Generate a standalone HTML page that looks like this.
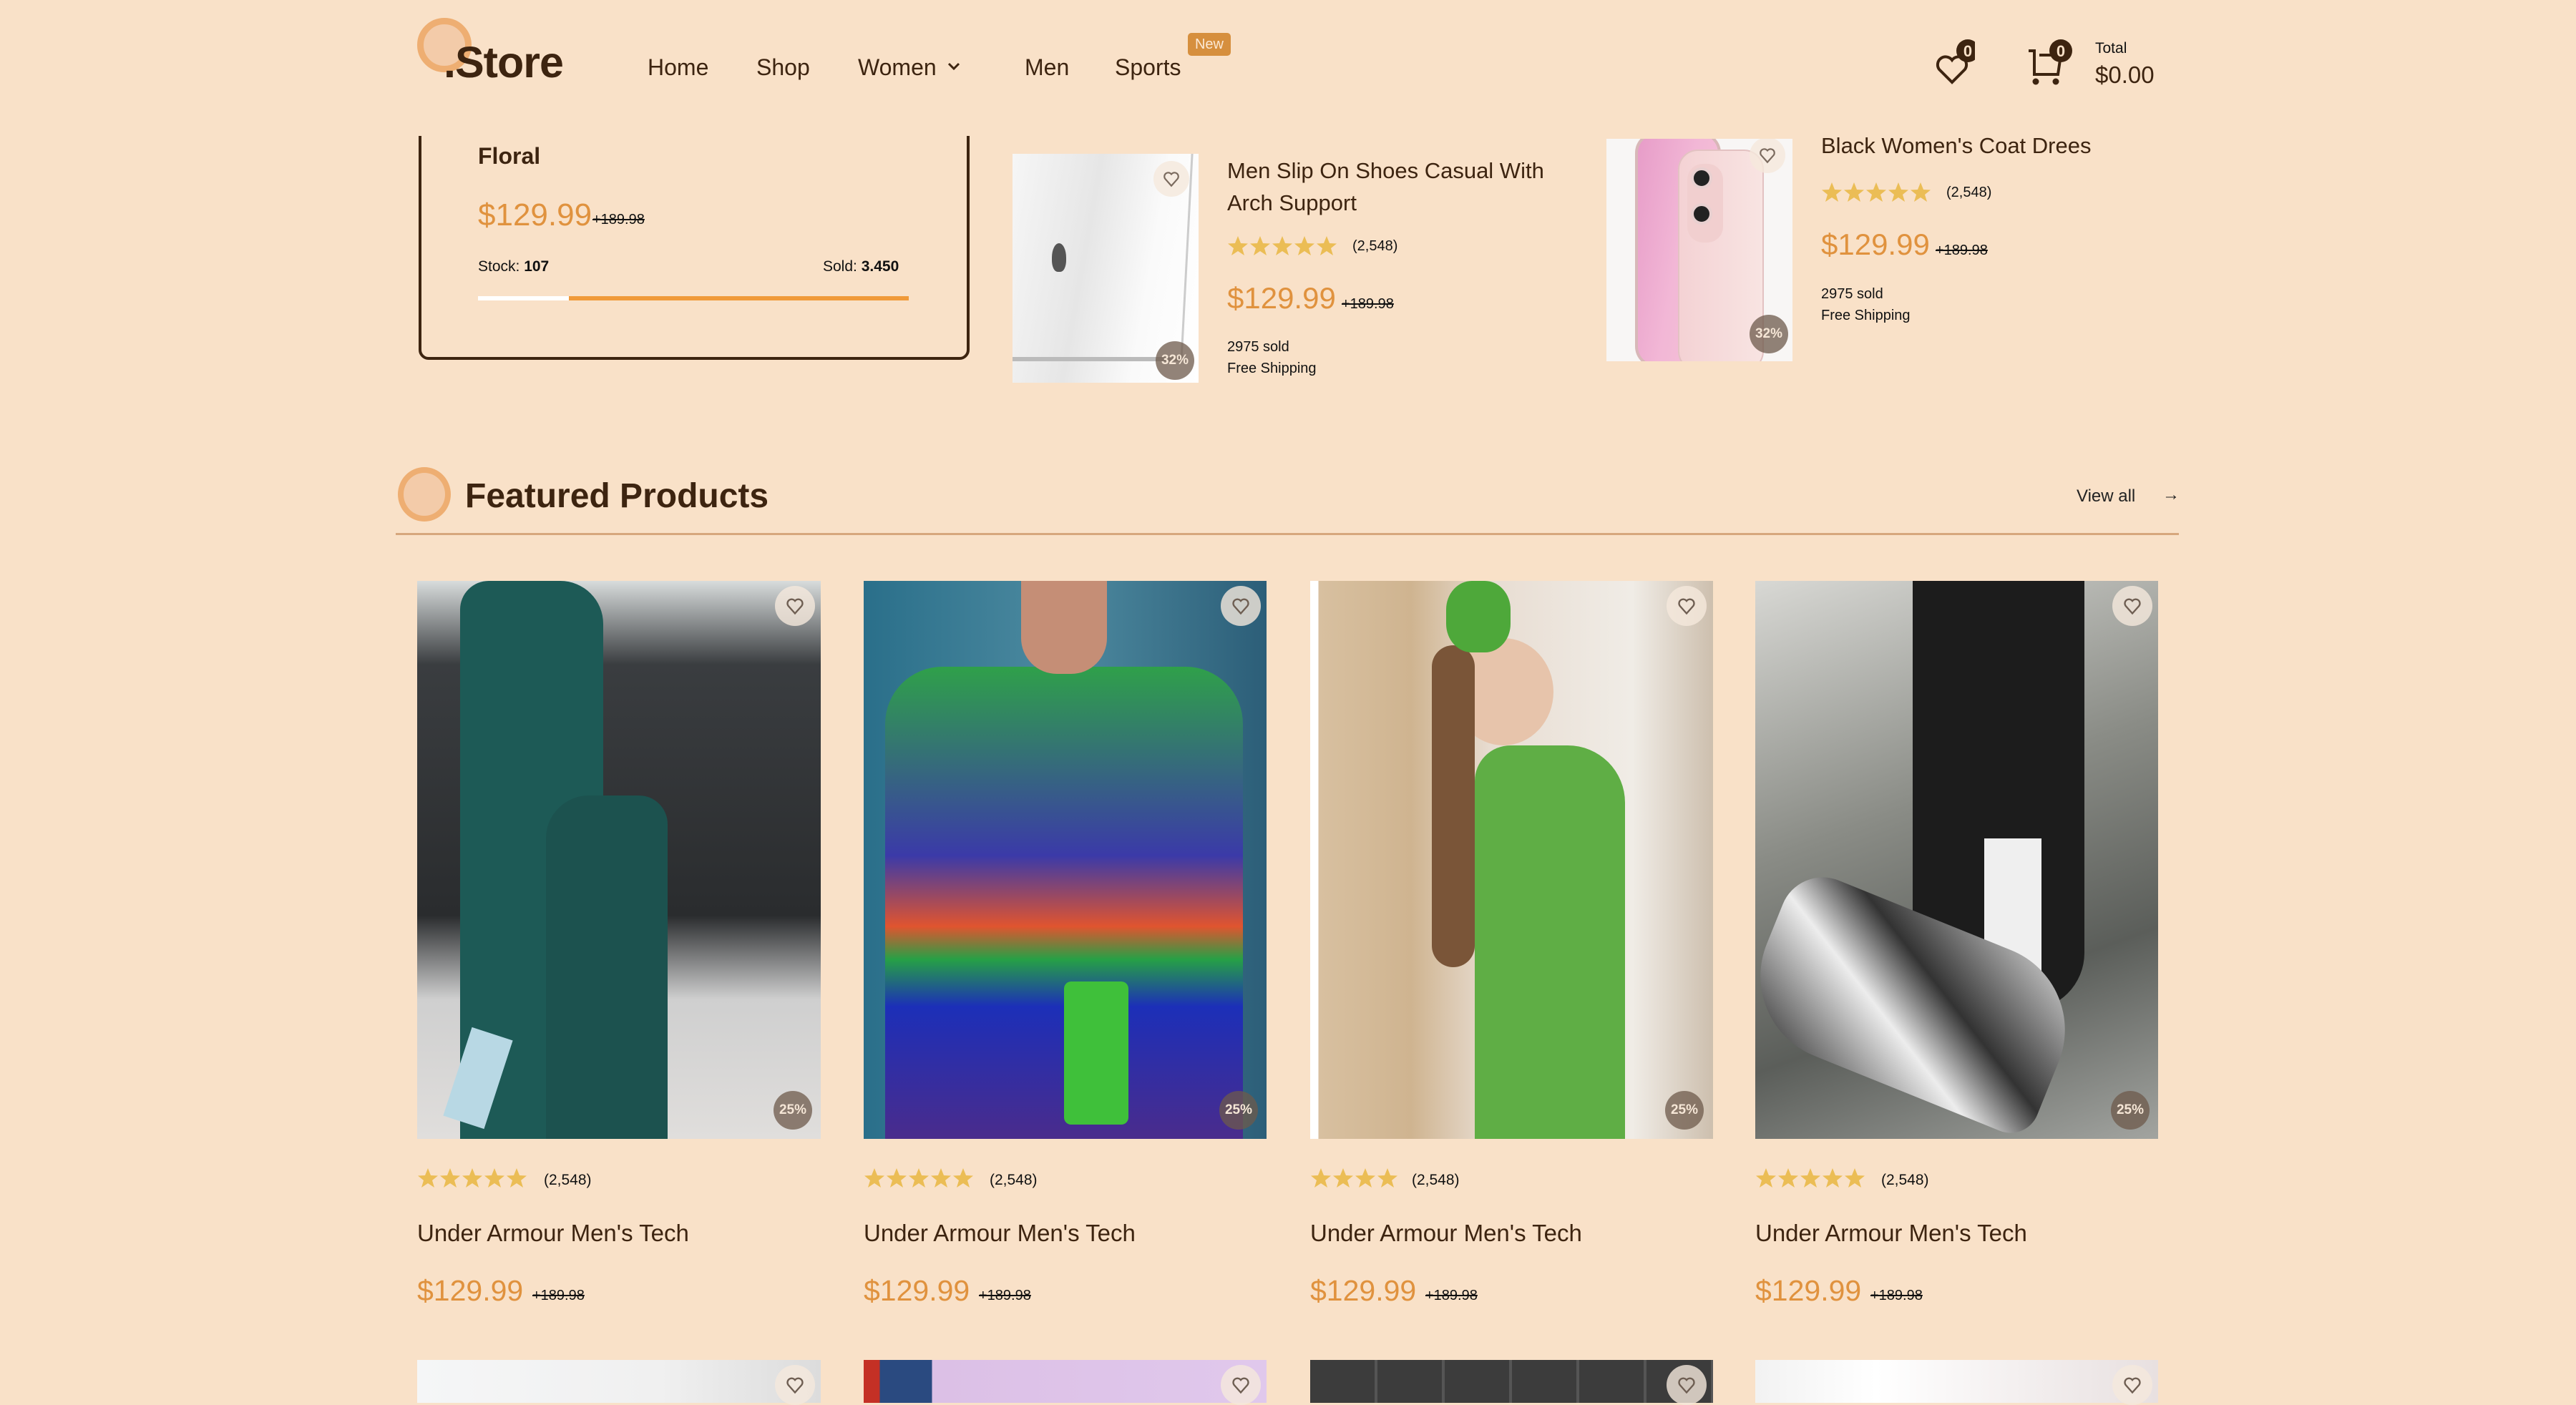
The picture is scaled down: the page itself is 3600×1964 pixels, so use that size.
<!DOCTYPE html>
<html><head><meta charset="utf-8"><style>
*{margin:0;padding:0;box-sizing:border-box}
body{width:3600px;height:1958px;background:#f9e1c8;font-family:"Liberation Sans",sans-serif;color:#3d2410;position:relative;overflow:hidden}
.a{position:absolute;white-space:nowrap}
.nav{font-size:32px;top:76px}
.price{color:#e0923e}
.old{color:#111;text-decoration:line-through;font-size:20px}
.heart{position:absolute;width:56px;height:56px;border-radius:50%;background:rgba(245,232,220,.8);display:flex;align-items:center;justify-content:center}
.disc{position:absolute;width:54px;height:54px;border-radius:50%;background:rgba(110,90,75,.75);color:#f5e6d6;font-size:19px;font-weight:bold;display:flex;align-items:center;justify-content:center}
.img{position:absolute;overflow:hidden}
</style></head><body>
<svg width="0" height="0" style="position:absolute"><defs><polygon id="st" points="15,1 19,11 29,11.5 21,18 24,28 15,22 6,28 9,18 1,11.5 11,11" fill="#ebbd55"/></defs></svg>

<!-- flash card -->
<div class="a" style="left:585px;top:150px;width:770px;height:353px;border:4px solid #3d2410;border-radius:14px"></div>
<div class="a" style="left:668px;top:200px;font-size:32px;font-weight:bold">Floral</div>
<div class="a price" style="left:668px;top:276px;font-size:44px">$129.99</div>
<div class="a old" style="left:828px;top:296px">+189.98</div>
<div class="a" style="left:668px;top:361px;font-size:21px;color:#111">Stock: <b>107</b></div>
<div class="a" style="left:1150px;top:361px;font-size:21px;color:#111">Sold: <b>3.450</b></div>
<div class="a" style="left:668px;top:414px;width:127px;height:6px;background:#fff"></div>
<div class="a" style="left:795px;top:414px;width:475px;height:6px;background:#f09a3a"></div>

<!-- header -->
<div class="a" style="left:0;top:0;width:3600px;height:190px;background:#f9e1c8"></div>
<div class="a" style="left:583px;top:25px;width:76px;height:76px;border-radius:50%;background:#f3cba9;border:9px solid #eeae72"></div>
<div class="a" style="left:620px;top:52px;font-size:61px;font-weight:bold;letter-spacing:-1px">.Store</div>
<div class="a nav" style="left:905px">Home</div>
<div class="a nav" style="left:1057px">Shop</div>
<div class="a nav" style="left:1199px">Women</div>
<svg class="a" style="left:1323px;top:86px" width="20" height="14" viewBox="0 0 20 14"><path d="M3 3l7 7 7-7" fill="none" stroke="#3d2410" stroke-width="3"/></svg>
<div class="a nav" style="left:1432px">Men</div>
<div class="a nav" style="left:1558px">Sports</div>
<div class="a" style="left:1660px;top:46px;width:60px;height:32px;background:#d68f3e;border-radius:5px;color:#fbe8d4;font-size:20px;text-align:center;line-height:32px">New</div>
<svg class="a" style="left:2700px;top:55px" width="60" height="65" viewBox="0 0 60 65"><path d="M28 60L10 42a11 11 0 0 1 18-13a11 11 0 0 1 18 13z" fill="none" stroke="#3d2410" stroke-width="4"/><circle cx="50" cy="16" r="16" fill="#3d2410"/><text x="50" y="24" font-size="22" font-weight="bold" fill="#f9e1c8" text-anchor="middle" font-family="Liberation Sans">0</text></svg>
<svg class="a" style="left:2830px;top:55px" width="70" height="65" viewBox="0 0 70 65"><path d="M5 16h8v33h33l4-27H20" fill="none" stroke="#3d2410" stroke-width="4"/><circle cx="15" cy="59" r="4.5" fill="#3d2410"/><circle cx="43" cy="59" r="4.5" fill="#3d2410"/><circle cx="50" cy="16" r="16" fill="#3d2410"/><text x="50" y="24" font-size="22" font-weight="bold" fill="#f9e1c8" text-anchor="middle" font-family="Liberation Sans">0</text></svg>
<div class="a" style="left:2928px;top:56px;font-size:21px;color:#111">Total</div>
<div class="a" style="left:2928px;top:86px;font-size:33px">$0.00</div>

<!-- laptop item -->
<div class="img" style="left:1415px;top:215px;width:260px;height:320px;background:linear-gradient(100deg,#f6f6f6 0%,#e6e6e6 40%,#fafafa 70%,#fff 100%)">
 <div style="position:absolute;left:0;top:0;width:245px;height:290px;border-right:3px solid #ccc;border-bottom:6px solid #bbb;transform:skewX(-3deg)"></div>
 <div style="position:absolute;left:55px;top:125px;width:20px;height:40px;background:#555;border-radius:50% 50% 40% 40%"></div>
 <div class="heart" style="left:197px;top:10px;width:50px;height:50px"><svg width="26" height="26" viewBox="0 0 24 24"><path d="M12 21L4 12a5 5 0 0 1 8-6a5 5 0 0 1 8 6z" fill="none" stroke="#7a6a5e" stroke-width="2"/></svg></div>
 <div class="disc" style="left:200px;top:262px">32%</div>
</div>
<div class="a" style="left:1715px;top:216px;font-size:31px;line-height:45px">Men Slip On Shoes Casual With<br>Arch Support</div>
<svg class="a" style="left:1715px;top:329px" width="160" height="30"><use href="#st"/><use href="#st" x="31"/><use href="#st" x="62"/><use href="#st" x="93"/><use href="#st" x="124"/></svg>
<div class="a" style="left:1890px;top:333px;font-size:20px;color:#111">(2,548)</div>
<div class="a price" style="left:1715px;top:393px;font-size:42px">$129.99</div>
<div class="a old" style="left:1875px;top:414px">+189.98</div>
<div class="a" style="left:1715px;top:474px;font-size:20px;color:#111">2975 sold</div>
<div class="a" style="left:1715px;top:504px;font-size:20px;color:#111">Free Shipping</div>

<!-- phone item -->
<div class="img" style="left:2245px;top:194px;width:260px;height:311px;background:#f8f6f5">
 <div style="position:absolute;left:40px;top:-10px;width:120px;height:330px;border-radius:30px;background:linear-gradient(100deg,#e79cc8,#f2b7d6 50%,#f5c4d8);border:4px solid #d8b8b8"></div>
 <div style="position:absolute;left:100px;top:15px;width:120px;height:310px;border-radius:28px;background:linear-gradient(90deg,#f4d2d4,#f8e4e2);border:2px solid #e3c2c2"></div>
 <div style="position:absolute;left:113px;top:35px;width:50px;height:110px;border-radius:22px;background:#f1cfcf"></div>
 <div style="position:absolute;left:118px;top:40px;width:30px;height:30px;border-radius:50%;background:#222;border:4px solid #e8d0d0"></div>
 <div style="position:absolute;left:118px;top:90px;width:30px;height:30px;border-radius:50%;background:#222;border:4px solid #e8d0d0"></div>
 <div class="heart" style="left:200px;top:-2px;width:50px;height:50px"><svg width="26" height="26" viewBox="0 0 24 24"><path d="M12 21L4 12a5 5 0 0 1 8-6a5 5 0 0 1 8 6z" fill="none" stroke="#7a6a5e" stroke-width="2"/></svg></div>
 <div class="disc" style="left:200px;top:246px">32%</div>
</div>
<div class="a" style="left:2545px;top:186px;font-size:31px">Black Women's Coat Drees</div>
<svg class="a" style="left:2545px;top:254px" width="160" height="30"><use href="#st"/><use href="#st" x="31"/><use href="#st" x="62"/><use href="#st" x="93"/><use href="#st" x="124"/></svg>
<div class="a" style="left:2720px;top:258px;font-size:20px;color:#111">(2,548)</div>
<div class="a price" style="left:2545px;top:318px;font-size:42px">$129.99</div>
<div class="a old" style="left:2705px;top:339px">+189.98</div>
<div class="a" style="left:2545px;top:400px;font-size:20px;color:#111">2975 sold</div>
<div class="a" style="left:2545px;top:430px;font-size:20px;color:#111">Free Shipping</div>

<!-- featured heading -->
<div class="a" style="left:556px;top:653px;width:74px;height:76px;border-radius:50%;background:#f3cba9;border:8px solid #eeae72"></div>
<div class="a" style="left:650px;top:666px;font-size:48px;font-weight:bold">Featured Products</div>
<div class="a" style="left:2902px;top:680px;font-size:24px;color:#222">View all</div>
<div class="a" style="left:3022px;top:678px;font-size:24px;color:#222">→</div>
<div class="a" style="left:553px;top:745px;width:2492px;height:3px;background:#d6a77d"></div>

<!-- product images -->
<div class="img" style="left:583px;top:812px;width:564px;height:780px;background:linear-gradient(180deg,#d8dcdc 0%,#3a3d40 15%,#2a2c2e 60%,#cfcfcf 75%,#e0dedc 100%)">
 <div style="position:absolute;left:60px;top:0;width:200px;height:780px;background:#1d5a56;border-radius:40px 60px 0 0"></div>
 <div style="position:absolute;left:180px;top:300px;width:170px;height:480px;background:#1c524f;border-radius:60px 40px 0 0"></div>
 <div style="position:absolute;left:55px;top:630px;width:60px;height:130px;background:#b8d8e4;transform:rotate(18deg)"></div>
</div>
<div class="img" style="left:1207px;top:812px;width:563px;height:780px;background:linear-gradient(90deg,#2a6f8a,#4d8aa0 50%,#2c5e78)">
 <div style="position:absolute;left:30px;top:120px;width:500px;height:660px;background:linear-gradient(180deg,#2fa04a 0%,#3b3aa8 40%,#e0542f 55%,#26a046 62%,#1c2fb8 72%,#4a2c8c 100%);border-radius:80px 80px 0 0"></div>
 <div style="position:absolute;left:280px;top:560px;width:90px;height:200px;background:#3fc03a;border-radius:10px"></div>
 <div style="position:absolute;left:220px;top:0;width:120px;height:130px;background:#c58e76;border-radius:0 0 50px 50px"></div>
</div>
<div class="img" style="left:1831px;top:812px;width:563px;height:780px;background:linear-gradient(90deg,#fff 0 2%,#d8c0a0 2%,#cfb490 25%,#e8ddd2 45%,#f0ece6 80%,#cdbfae)">
 <div style="position:absolute;left:200px;top:80px;width:140px;height:150px;background:#e7c4ab;border-radius:50%"></div>
 <div style="position:absolute;left:170px;top:90px;width:60px;height:450px;background:#7a5538;border-radius:30px"></div>
 <div style="position:absolute;left:230px;top:230px;width:210px;height:550px;background:#5fae45;border-radius:50px 80px 0 0"></div>
 <div style="position:absolute;left:190px;top:0;width:90px;height:100px;background:#4ea83a;border-radius:40%"></div>
</div>
<div class="img" style="left:2453px;top:812px;width:563px;height:780px;background:linear-gradient(160deg,#d8d8d4 0%,#8a8c86 40%,#5b5e5a 70%,#a2a4a0 100%)">
 <div style="position:absolute;left:220px;top:0;width:240px;height:600px;background:#1c1c1c;border-radius:0 0 80px 120px"></div>
 <div style="position:absolute;left:320px;top:360px;width:80px;height:260px;background:#efefef"></div>
 <div style="position:absolute;left:0;top:470px;width:440px;height:240px;background:linear-gradient(30deg,#2b2b2b,#ededed 40%,#333 60%,#ddd);border-radius:60px 120px 40px 120px;transform:rotate(22deg)"></div>
</div>

<div class="heart" style="left:1083px;top:819px"><svg width="28" height="28" viewBox="0 0 24 24"><path d="M12 21L4 12a5 5 0 0 1 8-6a5 5 0 0 1 8 6z" fill="none" stroke="#6e5e52" stroke-width="2"/></svg></div>
<div class="heart" style="left:1706px;top:819px"><svg width="28" height="28" viewBox="0 0 24 24"><path d="M12 21L4 12a5 5 0 0 1 8-6a5 5 0 0 1 8 6z" fill="none" stroke="#6e5e52" stroke-width="2"/></svg></div>
<div class="heart" style="left:2329px;top:819px"><svg width="28" height="28" viewBox="0 0 24 24"><path d="M12 21L4 12a5 5 0 0 1 8-6a5 5 0 0 1 8 6z" fill="none" stroke="#6e5e52" stroke-width="2"/></svg></div>
<div class="heart" style="left:2952px;top:819px"><svg width="28" height="28" viewBox="0 0 24 24"><path d="M12 21L4 12a5 5 0 0 1 8-6a5 5 0 0 1 8 6z" fill="none" stroke="#6e5e52" stroke-width="2"/></svg></div>
<div class="disc" style="left:1081px;top:1525px">25%</div>
<div class="disc" style="left:1704px;top:1525px">25%</div>
<div class="disc" style="left:2327px;top:1525px">25%</div>
<div class="disc" style="left:2950px;top:1525px">25%</div>

<!-- product texts -->
<svg class="a" style="left:583px;top:1632px" width="160" height="30"><use href="#st"/><use href="#st" x="31"/><use href="#st" x="62"/><use href="#st" x="93"/><use href="#st" x="124"/></svg>
<div class="a" style="left:760px;top:1638px;font-size:21px;color:#111">(2,548)</div>
<div class="a" style="left:583px;top:1705px;font-size:33px">Under Armour Men's Tech</div>
<div class="a price" style="left:583px;top:1781px;font-size:41px">$129.99</div>
<div class="a old" style="left:744px;top:1800px">+189.98</div>

<svg class="a" style="left:1207px;top:1632px" width="160" height="30"><use href="#st"/><use href="#st" x="31"/><use href="#st" x="62"/><use href="#st" x="93"/><use href="#st" x="124"/></svg>
<div class="a" style="left:1383px;top:1638px;font-size:21px;color:#111">(2,548)</div>
<div class="a" style="left:1207px;top:1705px;font-size:33px">Under Armour Men's Tech</div>
<div class="a price" style="left:1207px;top:1781px;font-size:41px">$129.99</div>
<div class="a old" style="left:1368px;top:1800px">+189.98</div>

<svg class="a" style="left:1831px;top:1632px" width="130" height="30"><use href="#st"/><use href="#st" x="31"/><use href="#st" x="62"/><use href="#st" x="93"/></svg>
<div class="a" style="left:1973px;top:1638px;font-size:21px;color:#111">(2,548)</div>
<div class="a" style="left:1831px;top:1705px;font-size:33px">Under Armour Men's Tech</div>
<div class="a price" style="left:1831px;top:1781px;font-size:41px">$129.99</div>
<div class="a old" style="left:1992px;top:1800px">+189.98</div>

<svg class="a" style="left:2453px;top:1632px" width="160" height="30"><use href="#st"/><use href="#st" x="31"/><use href="#st" x="62"/><use href="#st" x="93"/><use href="#st" x="124"/></svg>
<div class="a" style="left:2629px;top:1638px;font-size:21px;color:#111">(2,548)</div>
<div class="a" style="left:2453px;top:1705px;font-size:33px">Under Armour Men's Tech</div>
<div class="a price" style="left:2453px;top:1781px;font-size:41px">$129.99</div>
<div class="a old" style="left:2614px;top:1800px">+189.98</div>

<!-- next row -->
<div class="img" style="left:583px;top:1901px;width:564px;height:60px;background:linear-gradient(90deg,#f5f6f7,#f0f0f0 60%,#dcdcdc)"></div>
<div class="img" style="left:1207px;top:1901px;width:563px;height:60px;background:linear-gradient(90deg,#c43025 0 4%,#2a4a80 4% 17%,#dcc0e6 17%,#e0c8ec)"></div>
<div class="img" style="left:1831px;top:1901px;width:563px;height:60px;background:repeating-linear-gradient(90deg,#3c3c3c 0 90px,#555 90px 94px)"></div>
<div class="img" style="left:2453px;top:1901px;width:563px;height:60px;background:linear-gradient(90deg,#f2f2f2,#fff 30%,#e8e0e0)"></div>
<div class="heart" style="left:1083px;top:1908px"><svg width="28" height="28" viewBox="0 0 24 24"><path d="M12 21L4 12a5 5 0 0 1 8-6a5 5 0 0 1 8 6z" fill="none" stroke="#6e5e52" stroke-width="2"/></svg></div>
<div class="heart" style="left:1706px;top:1908px"><svg width="28" height="28" viewBox="0 0 24 24"><path d="M12 21L4 12a5 5 0 0 1 8-6a5 5 0 0 1 8 6z" fill="none" stroke="#6e5e52" stroke-width="2"/></svg></div>
<div class="heart" style="left:2329px;top:1908px"><svg width="28" height="28" viewBox="0 0 24 24"><path d="M12 21L4 12a5 5 0 0 1 8-6a5 5 0 0 1 8 6z" fill="none" stroke="#6e5e52" stroke-width="2"/></svg></div>
<div class="heart" style="left:2952px;top:1908px"><svg width="28" height="28" viewBox="0 0 24 24"><path d="M12 21L4 12a5 5 0 0 1 8-6a5 5 0 0 1 8 6z" fill="none" stroke="#6e5e52" stroke-width="2"/></svg></div>
</body></html>
